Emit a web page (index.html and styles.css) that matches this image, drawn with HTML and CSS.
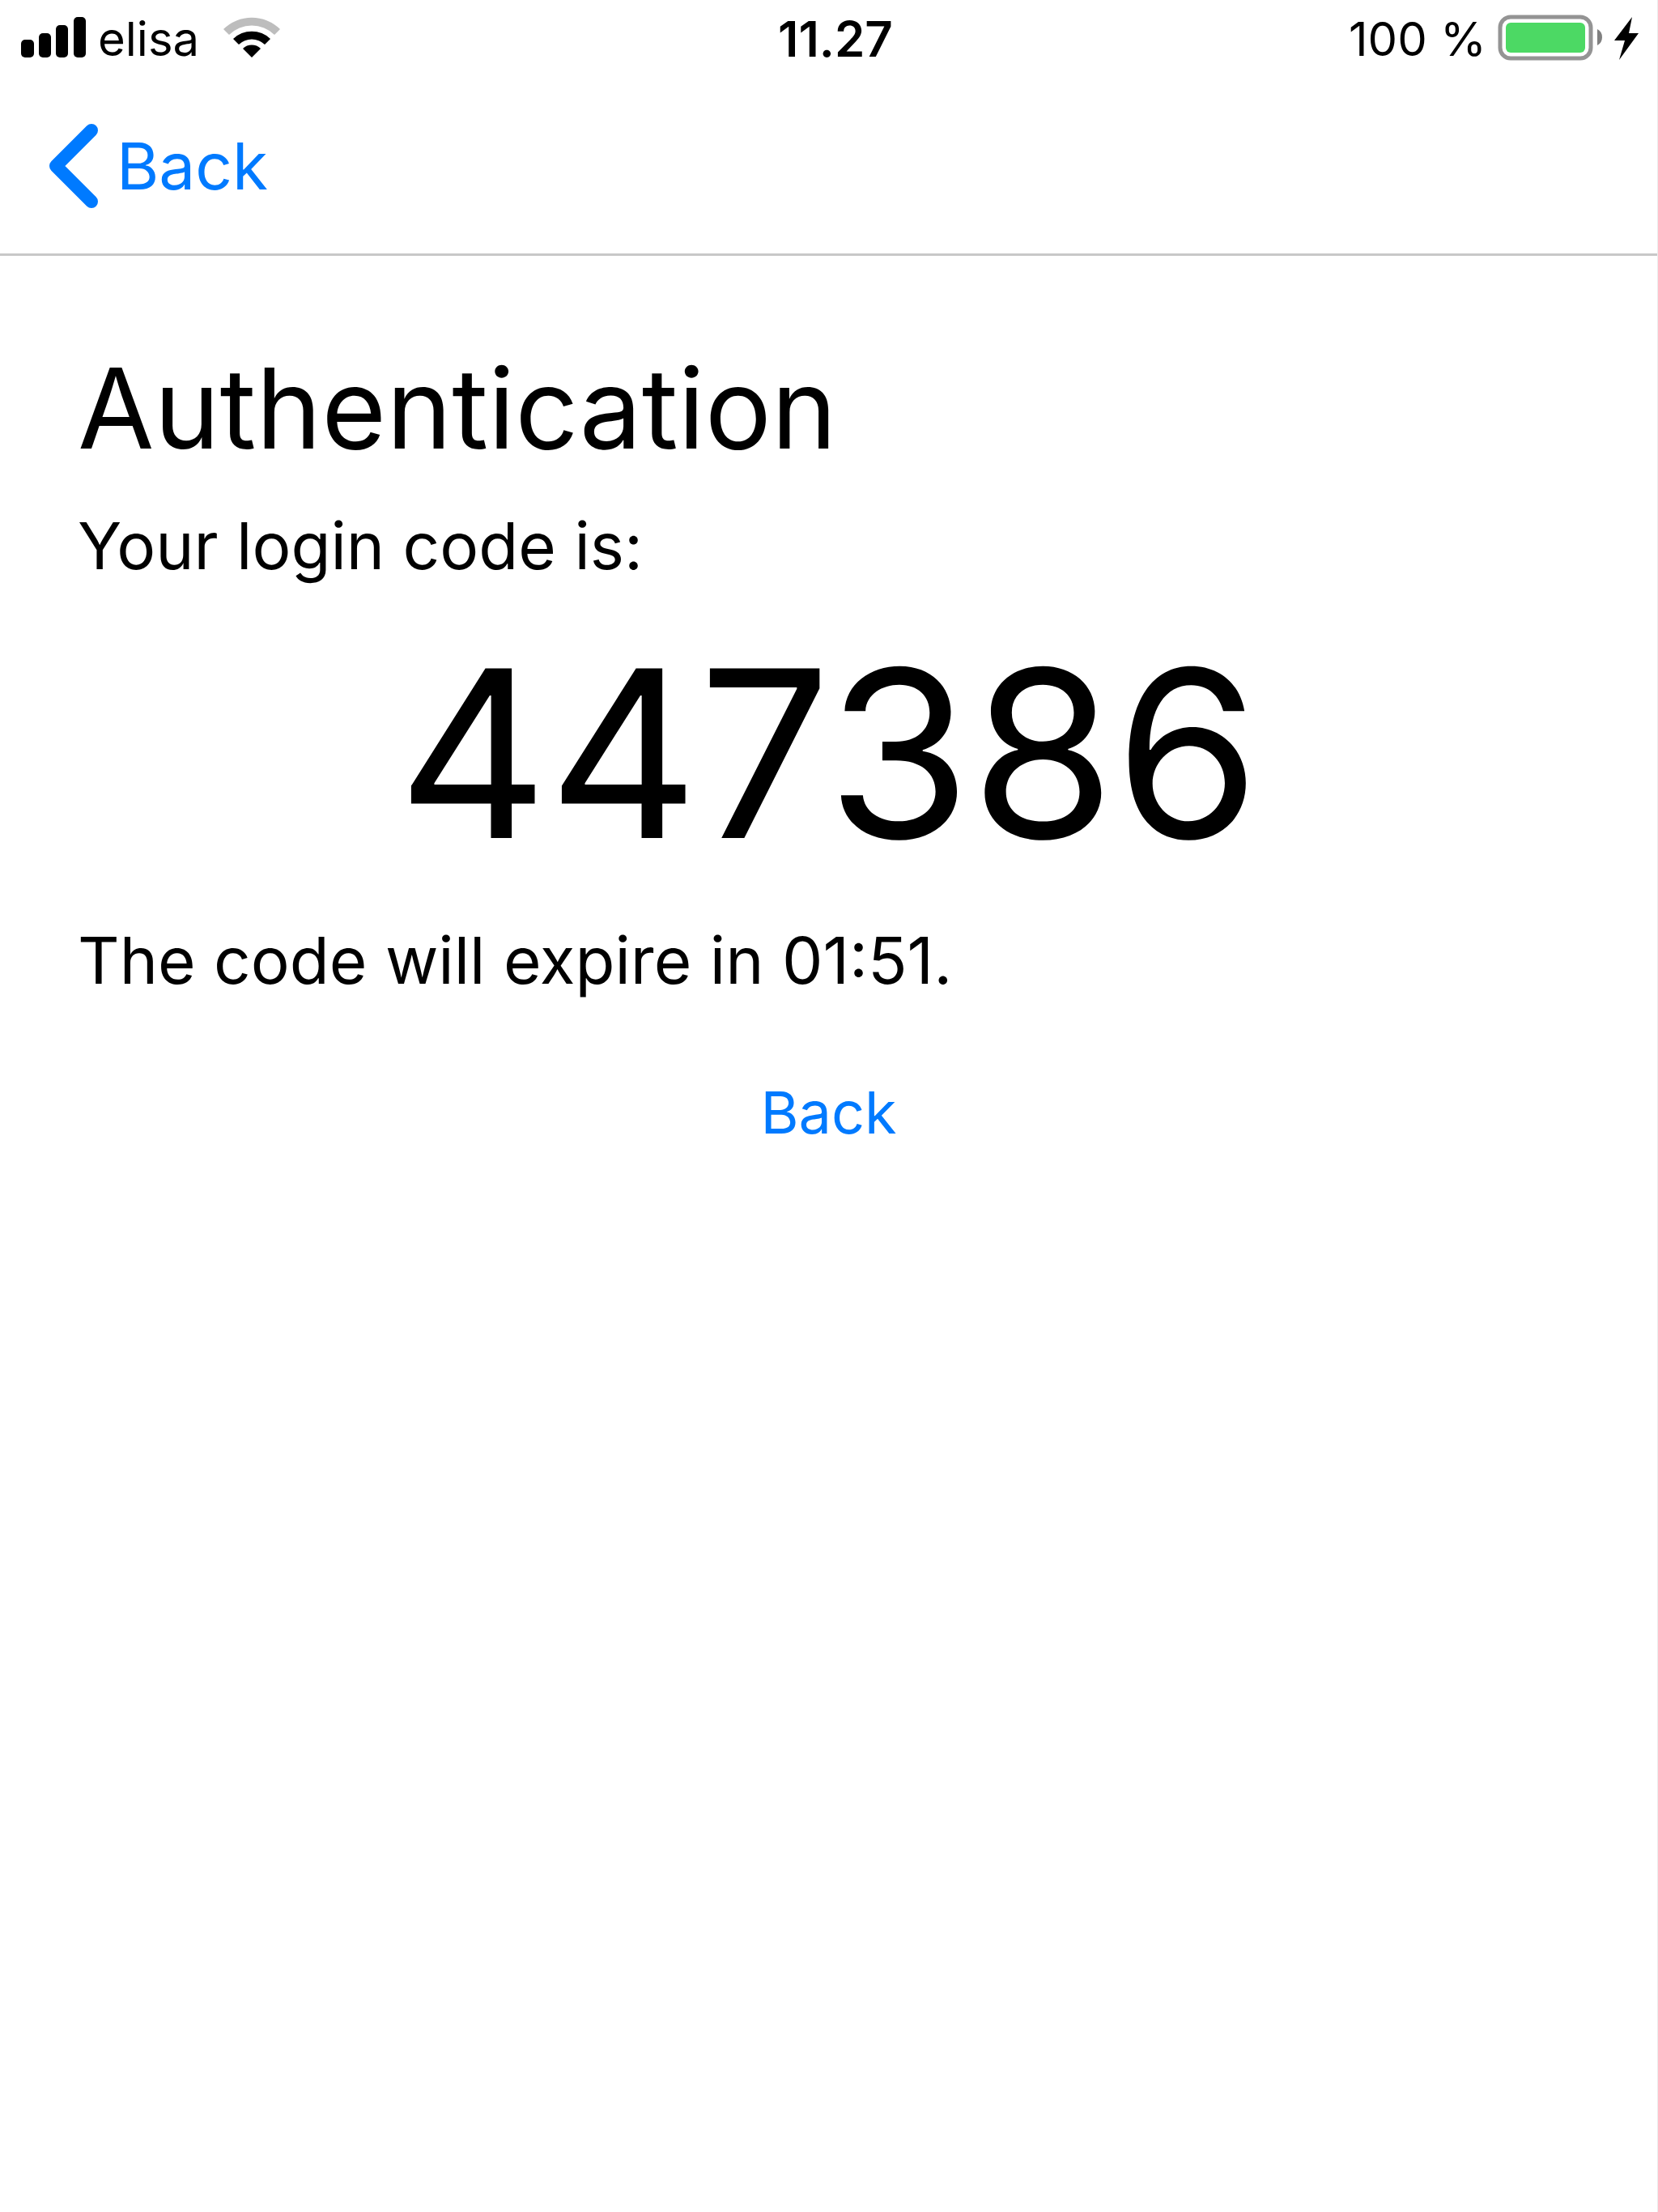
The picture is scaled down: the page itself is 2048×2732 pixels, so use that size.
FILE: index.html
```html
<!DOCTYPE html>
<html lang="en">
<head>
    <meta charset="UTF-8">
    <meta name="viewport" content="width=device-width, initial-scale=1.0">
    <title>Authentication</title>
    <link rel="stylesheet" href="styles.css">
</head>
<body>

<div class="status-bar">
    <div class="status-left">
        <svg class="signal" viewBox="0 0 80 54" width="80" height="54" aria-hidden="true">
            <rect x="0" y="28" width="16" height="22" rx="5"/>
            <rect x="22" y="20" width="15" height="30" rx="5"/>
            <rect x="43" y="10" width="15" height="40" rx="5"/>
            <rect x="65" y="0" width="15" height="50" rx="5"/>
        </svg>
        <span class="carrier">elisa</span>
        <svg class="wifi" viewBox="0 0 70 54" width="70" height="54" aria-hidden="true">
            <path fill="#bdbdbd" d="M0 15A50 50 0 0 1 70 15L63 22A40 40 0 0 0 7 22Z"/>
            <path d="M12 27A33 33 0 0 1 58 27L51 34A23 23 0 0 0 19 34Z"/>
            <path d="M24 39A16 16 0 0 1 46 39L35 50Z"/>
        </svg>
    </div>
    <span class="time">11.27</span>
    <div class="status-right">
        <span class="percent">100 %</span>
        <svg class="battery" viewBox="0 0 130 60" width="130" height="60" aria-hidden="true">
            <rect x="3" y="3" width="112" height="51" rx="13" fill="none" stroke="#949494" stroke-width="5"/>
            <rect x="10" y="10" width="98" height="37" rx="6" fill="#4cd964"/>
            <path fill="#808080" d="M123 18Q129 21 129 28Q129 35 123 38Z"/>
        </svg>
        <svg class="bolt" viewBox="0 0 30 54" width="30" height="54" aria-hidden="true">
            <path d="M22 0L0 29H13L6 53L30 20H18Z"/>
        </svg>
    </div>
</div>

<nav class="nav-bar">
    <a class="nav-back" href="#">
        <svg viewBox="0 0 62 104" width="62" height="104" aria-hidden="true">
            <path d="M53 8L9 52L53 96" fill="none" stroke="currentColor" stroke-width="16" stroke-linecap="round" stroke-linejoin="round"/>
        </svg>
        <span>Back</span>
    </a>
</nav>

<main class="content">
    <h1>Authentication</h1>
    <p>Your login code is:</p>
    <div class="code">447386</div>
    <p>The code will expire in 01:51.</p>
    <button class="back-button" type="button">Back</button>
</main>

</body>
</html>
```

FILE: styles.css
```css
* {
    box-sizing: border-box;
}
body {
    margin: 0;
    min-height: 100vh;
    font-family: Inter, "Liberation Sans", sans-serif;
    background: #fff;
    color: #000;
    border-right: 1px solid #ececec;
}
svg {
    display: block;
    flex: none;
}
.status-bar {
    display: grid;
    grid-template-columns: 1fr auto 1fr;
    align-items: center;
    padding: 0 23px 0 26px;
    font-size: 58px;
    line-height: 96px;
}
.status-left, .status-right {
    display: flex;
    align-items: center;
}
.status-right {
    justify-content: flex-end;
}
.carrier {
    margin: 0 30px 0 15px;
}
.time {
    padding-left: 14px;
    font-size: 60px;
    font-weight: 600;
}
.battery {
    margin: 0 14px;
}
.nav-bar {
    display: flex;
    align-items: center;
    height: 220px;
    padding: 0 60px;
    border-bottom: 3px solid #c8c8c8;
}
.nav-back {
    display: flex;
    align-items: center;
    gap: 22px;
    font-size: 80px;
    line-height: 100px;
    color: #007aff;
    text-decoration: none;
}
.content {
    display: flex;
    flex-direction: column;
    gap: 34px;
    padding: 102px 96px;
}
h1 {
    margin: 0;
    font-size: 137px;
    font-weight: 400;
    line-height: 172px;
}
p {
    margin: 0;
    font-size: 80px;
    line-height: 100px;
}
.code {
    font-size: 288px;
    line-height: 344px;
    text-align: center;
}
.back-button {
    align-self: center;
    margin-top: 54px;
    padding: 0;
    border: none;
    background: none;
    font-family: inherit;
    font-size: 72px;
    line-height: 100px;
    color: #007aff;
    cursor: pointer;
}
```
